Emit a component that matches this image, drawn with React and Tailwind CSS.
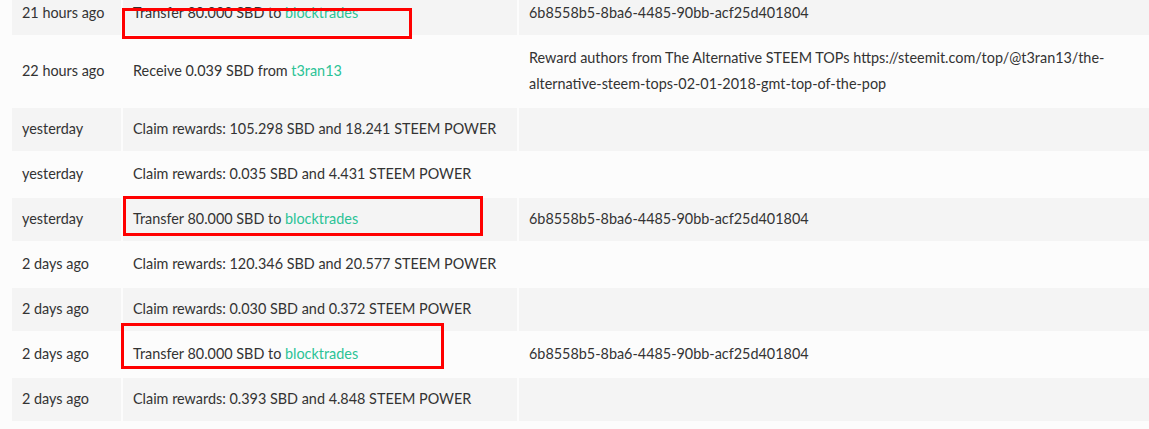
const rows = [
  { when: "21 hours ago", what: ["Transfer 80.000 SBD to ", "blocktrades"], memo: "6b8558b5-8ba6-4485-90bb-acf25d401804" },
  {
    when: "22 hours ago",
    what: ["Receive 0.039 SBD from ", "t3ran13"],
    memo: "Reward authors from The Alternative STEEM TOPs https://steemit.com/top/@t3ran13/the-alternative-steem-tops-02-01-2018-gmt-top-of-the-pop",
  },
  { when: "yesterday", what: ["Claim rewards: 105.298 SBD and 18.241 STEEM POWER"], memo: "" },
  { when: "yesterday", what: ["Claim rewards: 0.035 SBD and 4.431 STEEM POWER"], memo: "" },
  { when: "yesterday", what: ["Transfer 80.000 SBD to ", "blocktrades"], memo: "6b8558b5-8ba6-4485-90bb-acf25d401804" },
  { when: "2 days ago", what: ["Claim rewards: 120.346 SBD and 20.577 STEEM POWER"], memo: "" },
  { when: "2 days ago", what: ["Claim rewards: 0.030 SBD and 0.372 STEEM POWER"], memo: "" },
  { when: "2 days ago", what: ["Transfer 80.000 SBD to ", "blocktrades"], memo: "6b8558b5-8ba6-4485-90bb-acf25d401804" },
  { when: "2 days ago", what: ["Claim rewards: 0.393 SBD and 4.848 STEEM POWER"], memo: "" },
];

const App = () => {
  return (
    <div
      className="relative w-[1149px] h-[429px] overflow-hidden bg-[#fcfcfc] text-[#333] text-[14.4px] leading-[26px]"
      style={{ fontFamily: "Lato, 'Noto Sans', sans-serif" }}
    >
      <table className="-mt-[10px] ml-[10px] w-[1160px] border-separate border-spacing-[2px] table-fixed">
        <colgroup>
          <col className="w-[109px]" />
          <col className="w-[394px]" />
          <col />
        </colgroup>
        <tbody>
          {rows.map((r, i) => {
            const bg = i % 2 === 0 ? "bg-[#f4f4f4]" : "bg-[#fcfcfc]";
            return (
              <tr key={i}>
                <td className={`${bg} pl-[10px] pt-[8px] pb-[9px] align-middle whitespace-nowrap`}>{r.when}</td>
                <td className={`${bg} pl-[10px] pt-[8px] pb-[9px] align-middle whitespace-nowrap`}>
                  {r.what[0]}
                  {r.what[1] && <a className="text-[#2bc396]">{r.what[1]}</a>}
                </td>
                <td className={`${bg} pl-[10px] pr-[22px] pt-[8px] pb-[9px] align-middle`}>{r.memo}</td>
              </tr>
            );
          })}
        </tbody>
      </table>

      {/* red highlight boxes drawn over the screenshot */}
      <div className="absolute left-[122px] top-[8px] w-[290px] h-[31px] border-[3px] border-[#ff0000]" />
      <div className="absolute left-[123px] top-[196px] w-[360px] h-[40px] border-[3px] border-[#ff0000]" />
      <div className="absolute left-[121px] top-[323px] w-[323px] h-[46px] border-[3px] border-[#ff0000]" />
    </div>
  );
};

export default App;
